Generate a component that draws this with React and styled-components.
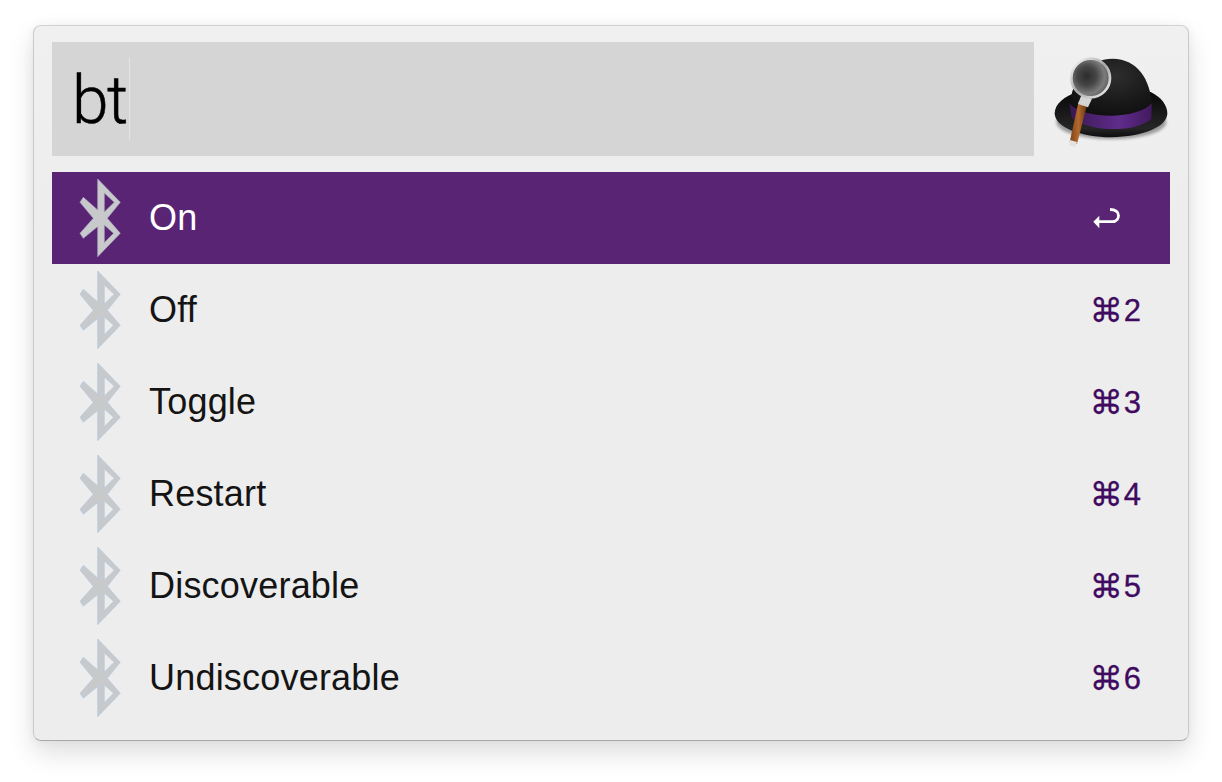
import React from "react";
import styled, { createGlobalStyle } from "styled-components";

const GlobalStyle = createGlobalStyle`
  html, body {
    margin: 0;
    padding: 0;
    background: #fff;
  }
  body {
    font-family: "Liberation Sans", Arial, sans-serif;
  }
`;

const Page = styled.div`
  width: 1222px;
  height: 782px;
  padding: 25px 33px 0;
  box-sizing: border-box;
  overflow: hidden;
`;

const Window = styled.div`
  width: 1156px;
  height: 716px;
  box-sizing: border-box;
  padding: 16px 18px;
  background: linear-gradient(#f0f0f0, #ededed 30%);
  border: 1px solid #c9c9c9;
  border-top-color: #d2d2d2;
  border-bottom-color: #a9a9a9;
  border-radius: 8px;
  box-shadow: 0 12px 26px rgba(0, 0, 0, 0.13), 0 0 10px rgba(0, 0, 0, 0.05);
`;

const Header = styled.div`
  display: flex;
  height: 114px;
  margin-bottom: 16px;
`;

const SearchBox = styled.div`
  flex: 1;
  display: flex;
  align-items: center;
  padding-left: 20px;
  background: #d5d5d5;
`;

const Query = styled.span`
  padding-top: 3px;
  font-family: "Roboto", "Liberation Sans", sans-serif;
  font-size: 66px;
  font-weight: 300;
  color: #000;
  letter-spacing: -1.5px;
  -webkit-text-stroke: 0.5px #000;
`;

const Caret = styled.span`
  width: 1px;
  height: 82px;
  margin-left: 2px;
  background: #e4e4e4;
`;

const Logo = styled.svg`
  display: block;
  width: 136px;
  height: 114px;
  flex: none;
`;

const Row = styled.div`
  display: flex;
  align-items: center;
  height: 92px;
  padding: 0 29px 0 26px;
  background: ${props => (props.selected ? "#5a2474" : "transparent")};
  color: ${props => (props.selected ? "#fff" : "#141414")};
`;

const Glyph = styled.svg`
  display: block;
  flex: none;
  width: 44px;
  height: 80px;
`;

const Title = styled.span`
  flex: 1;
  margin-left: 27px;
  font-size: 36px;
  letter-spacing: 0.2px;
  line-height: 46px;
`;

const Shortcut = styled.span`
  display: flex;
  align-items: center;
  padding-top: 2px;
  font-size: 31px;
  line-height: 40px;
  color: #3f0a60;
  -webkit-text-stroke: 0.3px #3f0a60;
`;

const Command = styled.span`
  font-family: "DejaVu Sans", sans-serif;
  font-size: 33px;
  margin-right: 1px;
`;

const ReturnIcon = styled.svg`
  display: block;
  width: 28px;
  height: 24px;
  margin-right: 20px;
`;

const items = [
  { title: "On", selected: true },
  { title: "Off", key: "2" },
  { title: "Toggle", key: "3" },
  { title: "Restart", key: "4" },
  { title: "Discoverable", key: "5" },
  { title: "Undiscoverable", key: "6" },
];

function BluetoothGlyph({ selected }) {
  return (
    <Glyph viewBox="0 0 44 80">
      <path
        fillRule="evenodd"
        fill="#c8c9cb"
        stroke={selected ? "#b0adc8" : "#abc8e8"}
        strokeWidth="0.6"
        d="M19.7 1 L42.3 24.3 L29.3 40.3 L42.3 55.3 L19.7 78.7 L19.7 48.5 L5.3 60.3 L2 55.3 L15.3 40.3 L2 24.3 L5.3 19.3 L19.7 32 Z
           M26.3 15 L36.3 24.3 L26.3 34 Z
           M26.3 47 L35.6 55.3 L26.3 64.7 Z"
      />
    </Glyph>
  );
}

function HatLogo() {
  return (
    <Logo viewBox="0 36 408 342">
      <defs>
        <radialGradient id="dome" cx="0.55" cy="0.3" r="0.8">
          <stop offset="0" stopColor="#2e2e2e" />
          <stop offset="0.6" stopColor="#181818" />
          <stop offset="1" stopColor="#0c0c0c" />
        </radialGradient>
        <linearGradient id="brim" x1="0" y1="0" x2="0" y2="1">
          <stop offset="0" stopColor="#080808" />
          <stop offset="0.8" stopColor="#262626" />
          <stop offset="1" stopColor="#0c0c0c" />
        </linearGradient>
        <linearGradient id="band" x1="0" y1="0" x2="1" y2="0">
          <stop offset="0" stopColor="#3a1852" />
          <stop offset="0.6" stopColor="#5f2c8c" />
          <stop offset="1" stopColor="#43195f" />
        </linearGradient>
        <radialGradient id="lens" cx="0.4" cy="0.45" r="0.62">
          <stop offset="0" stopColor="#2c2c2c" />
          <stop offset="0.4" stopColor="#464646" />
          <stop offset="0.75" stopColor="#7c7c7c" />
          <stop offset="1" stopColor="#5a5a5a" />
        </radialGradient>
        <linearGradient id="ring" x1="0" y1="0" x2="1" y2="1">
          <stop offset="0" stopColor="#fbfbfb" />
          <stop offset="0.5" stopColor="#a8a8a8" />
          <stop offset="1" stopColor="#f2f2f2" />
        </linearGradient>
        <linearGradient id="handle" x1="0" y1="0" x2="1" y2="0">
          <stop offset="0" stopColor="#7a4318" />
          <stop offset="0.5" stopColor="#b4692c" />
          <stop offset="1" stopColor="#5f3311" />
        </linearGradient>
        <filter id="soft">
          <feGaussianBlur stdDeviation="5" />
        </filter>
      </defs>
      <ellipse cx="232" cy="276" rx="165" ry="52" fill="#000" opacity="0.35" filter="url(#soft)" />
      <path
        d="M62 250 C62 222 92 198 130 186 L350 186 C380 200 400 225 400 250 C400 292 325 320 232 322 C140 322 62 292 62 250 Z"
        fill="url(#brim)"
      />
      <path
        d="M108 226 C112 150 160 86 236 86 C310 86 350 150 353 224 C320 272 150 272 108 226 Z"
        fill="url(#dome)"
      />
      <path
        d="M108 222 C150 268 310 270 353 220 L352 266 C310 308 165 308 114 264 C110 250 108 236 108 222 Z"
        fill="url(#band)"
      />
      <path d="M134 214 L160 222 L129 342 L107 336 Z" fill="url(#handle)" />
      <path d="M108 330 L129 336 L124 351 L105 346 Z" fill="#e2e2e2" />
      <path d="M142 196 L174 206 L162 232 L132 222 Z" fill="#d4d4d4" />
      <circle cx="170" cy="144" r="58" fill="url(#lens)" stroke="url(#ring)" strokeWidth="8" />
    </Logo>
  );
}

export default function App() {
  return (
    <Page>
      <GlobalStyle />
      <Window>
        <Header>
          <SearchBox>
            <Query>bt</Query>
            <Caret />
          </SearchBox>
          <HatLogo />
        </Header>
        {items.map(item => (
          <Row key={item.title} selected={item.selected}>
            <BluetoothGlyph selected={item.selected} />
            <Title>{item.title}</Title>
            {item.selected ? (
              <ReturnIcon viewBox="0 0 28 24">
                <path
                  d="M3 15.7 H19 C24 15.7 25.5 12 25.5 9.5 C25.5 6 22.5 3.5 17 3.5"
                  fill="none"
                  stroke="#fff"
                  strokeWidth="2.8"
                />
                <path d="M0.3 15.7 L6.3 9.8 V22.3 Z" fill="#fff" />
              </ReturnIcon>
            ) : (
              <Shortcut>
                <Command>⌘</Command>
                {item.key}
              </Shortcut>
            )}
          </Row>
        ))}
      </Window>
    </Page>
  );
}
